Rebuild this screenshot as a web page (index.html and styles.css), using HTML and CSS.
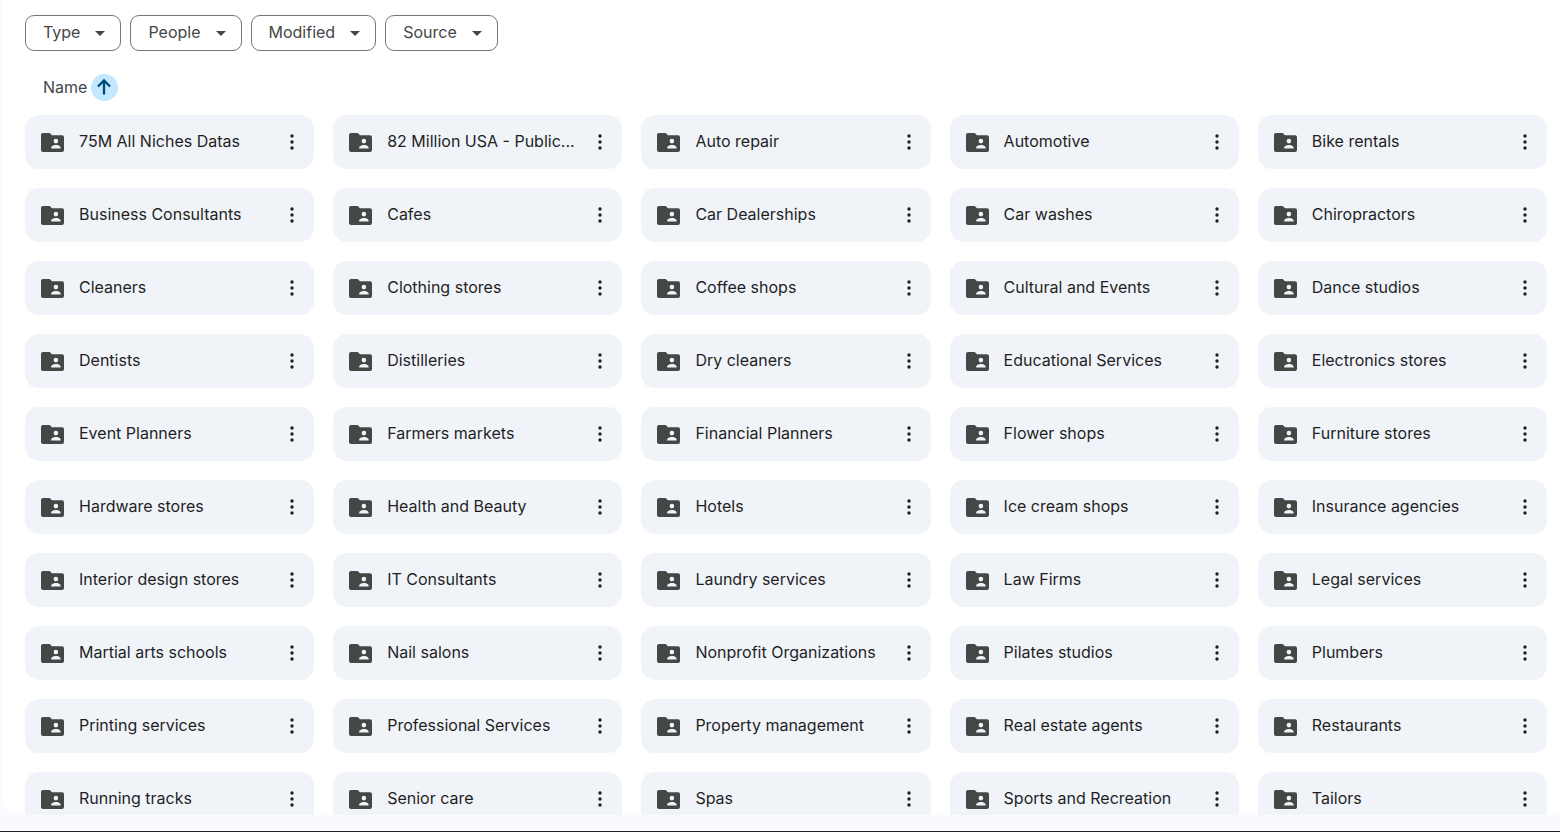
FILE: index.html
```html
<!DOCTYPE html>
<html lang="en">
<head>
    <meta charset="utf-8">
    <title>Folders</title>
    <link rel="stylesheet" href="styles.css">
</head>
<body>
    <main class="panel">
        <div class="filters">
            <button class="filter" type="button"><span class="label">Type</span><svg class="caret" viewBox="0 0 10 5"><path d="M0 0h10L5 5z"/></svg></button>
            <button class="filter" type="button"><span class="label">People</span><svg class="caret" viewBox="0 0 10 5"><path d="M0 0h10L5 5z"/></svg></button>
            <button class="filter" type="button"><span class="label">Modified</span><svg class="caret" viewBox="0 0 10 5"><path d="M0 0h10L5 5z"/></svg></button>
            <button class="filter" type="button"><span class="label">Source</span><svg class="caret" viewBox="0 0 10 5"><path d="M0 0h10L5 5z"/></svg></button>
        </div>

        <div class="sort">
            <span class="label">Name</span>
            <button class="sort-btn" type="button" aria-label="Reverse sort direction">
                <svg viewBox="0 0 27 27"><path d="M13 20.500V7M7 12.500l6-6 6 6"/></svg>
            </button>
        </div>

        <div class="grid" id="folderList"></div>
    </main>

    <script>
        const folders = [
            '75M All Niches Datas', '82 Million USA - Public...', 'Auto repair', 'Automotive', 'Bike rentals',
            'Business Consultants', 'Cafes', 'Car Dealerships', 'Car washes', 'Chiropractors',
            'Cleaners', 'Clothing stores', 'Coffee shops', 'Cultural and Events', 'Dance studios',
            'Dentists', 'Distilleries', 'Dry cleaners', 'Educational Services', 'Electronics stores',
            'Event Planners', 'Farmers markets', 'Financial Planners', 'Flower shops', 'Furniture stores',
            'Hardware stores', 'Health and Beauty', 'Hotels', 'Ice cream shops', 'Insurance agencies',
            'Interior design stores', 'IT Consultants', 'Laundry services', 'Law Firms', 'Legal services',
            'Martial arts schools', 'Nail salons', 'Nonprofit Organizations', 'Pilates studios', 'Plumbers',
            'Printing services', 'Professional Services', 'Property management', 'Real estate agents', 'Restaurants',
            'Running tracks', 'Senior care', 'Spas', 'Sports and Recreation', 'Tailors'
        ];

        const list = document.getElementById('folderList');
        folders.forEach(name => {
            const card = document.createElement('div');
            card.className = 'card';
            card.innerHTML = `
                <svg class="folder" viewBox="0 0 23 19">
                    <path fill="#444746" fill-rule="evenodd" d="M2 0H8.700l2.300 2.300h10A2 2 0 0 1 23 4.300V17a2 2 0 0 1-2 2H2a2 2 0 0 1-2-2V2A2 2 0 0 1 2 0zM14.900 5.800a2.300 2.300 0 1 0 0 4.600 2.300 2.300 0 0 0 0-4.600zM10.200 15.600h9.400v-1c0-1.600-3-2.500-4.700-2.500s-4.700.9-4.700 2.500z"/>
                </svg>
                <a class="name" href="#">${name}</a>
                <button class="more" type="button" aria-label="More actions">
                    <svg viewBox="0 0 4 16"><circle cx="2" cy="2" r="1.700"/><circle cx="2" cy="8" r="1.700"/><circle cx="2" cy="14" r="1.700"/></svg>
                </button>
            `;
            list.appendChild(card);
        });
    </script>
</body>
</html>
```

FILE: styles.css
```css
* {
    box-sizing: border-box;
}
body {
    display: flex;
    flex-direction: column;
    height: 100vh;
    margin: 0;
    padding: 0 0 16px 2px;
    overflow: hidden;
    background: #f8fafd;
    border-bottom: 1px solid #1f1f1f;
    font-family: Inter, Roboto, sans-serif;
    font-size: 16px;
    line-height: 20px;
    color: #1f1f1f;
}
button {
    padding: 0;
    border: 0;
    background: none;
    font: inherit;
    color: inherit;
    cursor: pointer;
}
svg {
    display: block;
    flex: none;
}
.panel {
    flex: 1;
    min-height: 0;
    padding: 15px 13px 0 23px;
    overflow: hidden;
    background: #fff;
    border-radius: 0 0 4px 18px;
}
.label, .name {
    padding-bottom: 2px;
}
.filters {
    display: flex;
    gap: 9px;
}
.filter {
    display: flex;
    align-items: center;
    gap: 15px;
    height: 36px;
    padding: 0 15px 0 17px;
    border: 1px solid #747775;
    border-radius: 9px;
    color: #444746;
}
.caret {
    width: 10px;
    height: 5px;
    fill: #444746;
}
.sort {
    display: flex;
    align-items: center;
    gap: 4px;
    height: 27px;
    margin: 23px 0 14px 18px;
    color: #444746;
}
.sort-btn {
    width: 27px;
    height: 27px;
    border-radius: 50%;
    background: #c2e7ff;
}
.sort-btn path {
    fill: none;
    stroke: #004a77;
    stroke-width: 2.3;
}
.grid {
    display: grid;
    grid-template-columns: repeat(5, minmax(0, 1fr));
    gap: 19px;
}
.card {
    display: flex;
    align-items: center;
    height: 54px;
    padding: 0 12px 0 16px;
    border-radius: 14px;
    background: #f0f4f9;
}
.folder {
    width: 23px;
    height: 19px;
}
.name {
    flex: 1;
    margin: 0 10px 0 15px;
    overflow: hidden;
    white-space: nowrap;
    text-overflow: ellipsis;
    color: inherit;
    text-decoration: none;
}
.more {
    display: flex;
    justify-content: center;
    width: 20px;
}
.more svg {
    width: 4px;
    height: 16px;
    fill: #1f1f1f;
}
```
